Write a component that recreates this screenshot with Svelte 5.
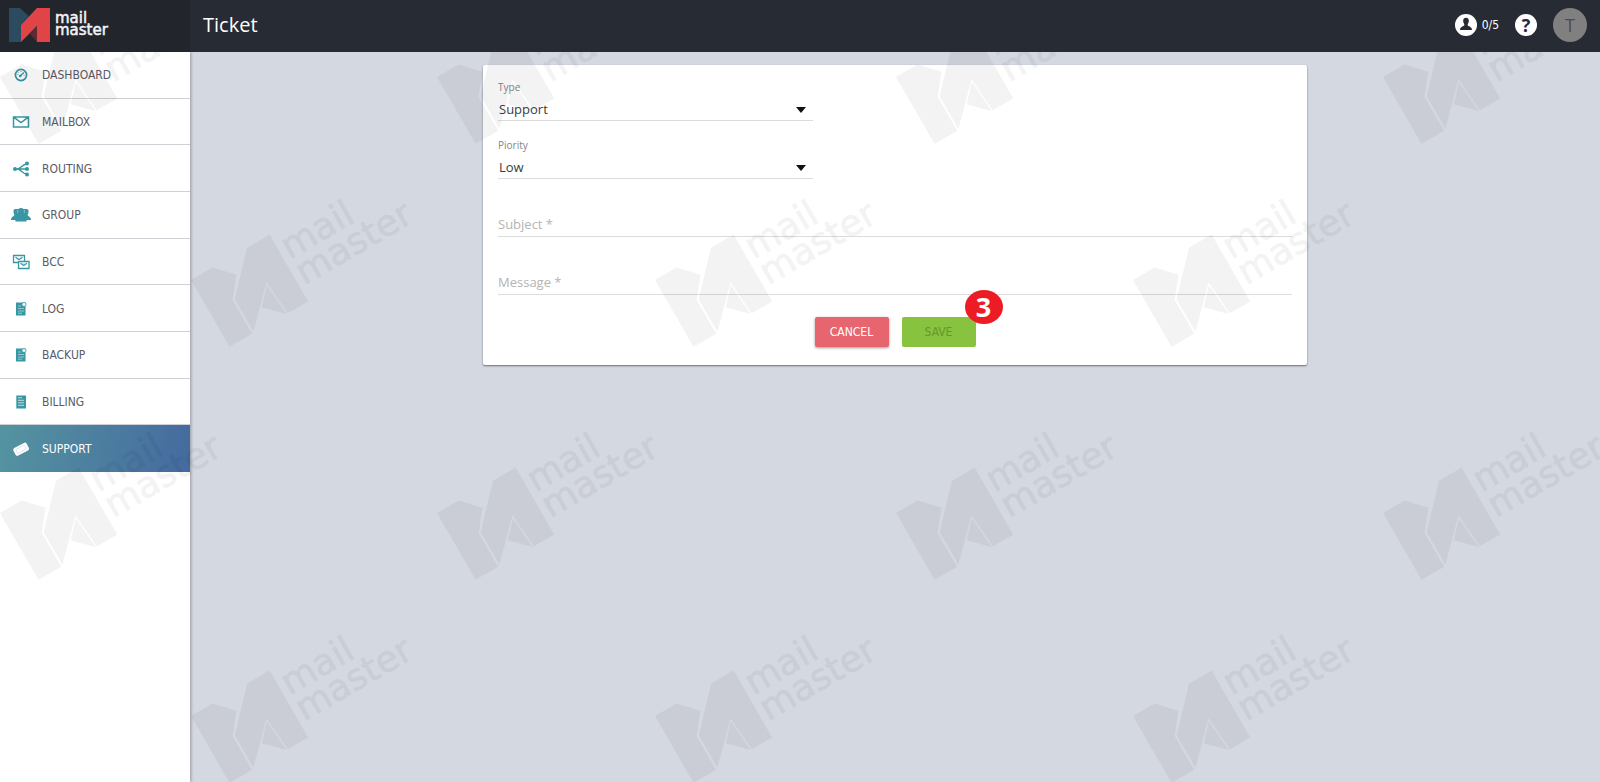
<script lang="ts">
  const menu = [
    'dashboard',
    'mailbox',
    'routing',
    'group',
    'bcc',
    'log',
    'backup',
    'billing',
    'support'
  ]
  const active = 'support'

  const watermarks = [
    [0, 77], [437, 77], [896, 77], [1383, 77],
    [191, 280], [655, 280], [1133, 280],
    [0, 513], [437, 513], [896, 513], [1383, 513],
    [191, 716], [655, 716], [1133, 716]
  ]

  let type = $state('Support')
  let priority = $state('Low')
  let subject = $state('')
  let message = $state('')
</script>

{#snippet arrow()}
  <svg class="arrow" width="10" height="6" viewBox="0 0 10 6" aria-hidden="true">
    <path d="M0 0H10L5 6Z" fill="#111" />
  </svg>
{/snippet}

{#snippet icon(name: string)}
  <svg class="icon" width="20" height="20" viewBox="0 0 20 20" aria-hidden="true">
    {#if name === 'dashboard'}
      <circle cx="10" cy="10" r="5.6" fill="none" stroke="currentColor" stroke-width="1.7" />
      <path d="M9 11L13 7.5" stroke="currentColor" stroke-width="1.4" />
      <circle cx="9.2" cy="11" r="1.3" fill="currentColor" />
      <path d="M6.5 9.5h1M7.5 7.3l.7.7M10 6v1M12.6 10.5h1" stroke="currentColor" stroke-width=".8" />
    {:else if name === 'mailbox'}
      <path d="M2.5 5H17.5V15H2.5Z M3 5.3L10 10.5L17 5.3" fill="none" stroke="currentColor" stroke-width="1.5" />
    {:else if name === 'routing'}
      <path d="M4 10H16M6 10C10 10 11 5 16 5M6 10C10 10 11 15 16 15" fill="none" stroke="currentColor" stroke-width="1.4" />
      <g fill="currentColor">
        <circle cx="4" cy="10" r="2" />
        <circle cx="16" cy="4.6" r="2" />
        <circle cx="16" cy="10" r="2" />
        <circle cx="16" cy="15.4" r="2" />
      </g>
    {:else if name === 'group'}
      <g fill="currentColor">
        <path d="M4.5 4C2.8 4 2.3 5.3 2.5 7C2.6 8.5 3.3 9 3.3 10C3.2 11.5 0 11.5 0 15H20C20 11.5 16.8 11.5 16.7 10C16.7 9 17.4 8.5 17.5 7C17.7 5.3 17.2 4 15.5 4Z" />
        <path d="M10 3C8 3 6.8 4 7 6.5C7.1 8.3 8.2 9.3 8.2 10.5C8.2 12.3 4.3 12.5 4.3 16.5H15.7C15.7 12.5 11.8 12.3 11.8 10.5C11.8 9.3 12.9 8.3 13 6.5C13.2 4 12 3 10 3Z" />
      </g>
      <path d="M6.7 5V8M13.3 5V8" stroke="#fff" stroke-width=".4" />
    {:else if name === 'bcc'}
      <g fill="#fff" stroke="currentColor" stroke-width="1.3">
        <path d="M2.5 3.5H13.5V10.5H2.5Z M4.5 5.3L8 7.5L11.5 5.3" />
        <path d="M7.5 9.5H18V16.5H7.5Z M9.5 11.3L12.8 13.5L16 11.3" />
      </g>
    {:else if name === 'log' || name === 'backup'}
      <path d="M5 3.5H14.5V16.5H5Z" fill="currentColor" />
      <path d="M7 7h3M7 9.5h6M7 12h6M7 14.2h4" stroke="#a9d6da" stroke-width=".8" />
      <circle cx="13" cy="5.5" r="2.1" fill="#e7f4f4" stroke="currentColor" stroke-width=".7" />
    {:else if name === 'billing'}
      <path d="M5.3 3.5H15V16.5H5.3Z" fill="currentColor" />
      <path d="M7 5.8h4M7 8.3h6M7 10.8h6M7 13.3h6" stroke="#cfe9ea" stroke-width=".9" />
    {:else}
      <g transform="rotate(-28 10 10)">
        <rect x="2.5" y="6" width="15" height="8.5" rx="2" fill="#fff" />
        <rect x="5" y="8" width="10" height="4.5" rx="1" fill="none" stroke="#c5d6df" stroke-width=".6" />
      </g>
    {/if}
  </svg>
{/snippet}

<div class="app">
  <header class="topbar">
    <a class="brand" href="#home" aria-label="mail master">
      <svg width="106" height="36" viewBox="0 0 106 36" aria-hidden="true">
        <path d="M0 0H11L23 11L12 20V34H0Z" fill="#2d4b5e" />
        <path d="M11 0L21 9L28 0V4L12 17L19 8Z" fill="#263a4c" />
        <path d="M28 0H41V34H28V18L12 34V17Z" fill="#e04447" />
        <path d="M28 18V34L21 26Z" fill="#5e2a33" />
        <g class="brand-text" fill="#f4f4f4" stroke="#f4f4f4" stroke-width=".5">
          <text x="46" y="15">mail</text>
          <text x="46" y="27">master</text>
        </g>
      </svg>
    </a>
    <h1>Ticket</h1>
    <div class="account">
      <button class="users" type="button">
        <svg width="22" height="22" viewBox="0 0 22 22" aria-hidden="true">
          <circle cx="11" cy="11" r="11" fill="#fff" />
          <path d="M11 3.8C8.9 3.8 8 5.3 8.2 7.5C8.3 9 9.4 9.8 9.4 11C9.4 12.3 5 12.3 5 16H17C17 12.3 12.6 12.3 12.6 11C12.6 9.8 13.7 9 13.8 7.5C14 5.3 13.1 3.8 11 3.8Z" fill="#272b33" />
        </svg>
        <span>0/5</span>
      </button>
      <button class="help" type="button" aria-label="Help">?</button>
      <button class="avatar" type="button">T</button>
    </div>
  </header>

  <div class="body">
    <aside class="sidebar">
      <nav>
        {#each menu as name}
          <a href="#{name}" class:active={name === active}>
            {@render icon(name)}
            <span>{name.toUpperCase()}</span>
          </a>
        {/each}
      </nav>
    </aside>

    <main>
      <form class="card" onsubmit={(e) => e.preventDefault()}>
        <div class="field half">
          <label for="type">Type</label>
          <div class="select">
            <select id="type" bind:value={type}>
              <option>Support</option>
              <option>Billing</option>
            </select>
            {@render arrow()}
          </div>
        </div>
        <div class="field half">
          <label for="priority">Piority</label>
          <div class="select">
            <select id="priority" bind:value={priority}>
              <option>Low</option>
              <option>Medium</option>
              <option>High</option>
            </select>
            {@render arrow()}
          </div>
        </div>
        <div class="field floating">
          <input id="subject" type="text" bind:value={subject} />
          <label for="subject" class:hidden={subject !== ''}>Subject *</label>
        </div>
        <div class="field floating">
          <textarea id="message" rows="1" bind:value={message}></textarea>
          <label for="message" class:hidden={message !== ''}>Message *</label>
        </div>
        <div class="actions">
          <button class="cancel" type="button">CANCEL</button>
          <div class="save-wrap">
            <button class="save" type="submit" disabled={!subject || !message}>SAVE</button>
            <span class="step">3</span>
          </div>
        </div>
      </form>
    </main>
  </div>

  <svg class="watermarks" aria-hidden="true">
    {#each watermarks as [x, y]}
      <g transform="translate({x} {y}) rotate(-30) scale(2.27)">
        <path d="M0 0H11L18.5 8L11.5 16.8V34H0Z" />
        <path d="M28.5 0H40V34H29.6L28.3 17.5L12.4 33.5V17Z" />
        <path d="M27.8 18.7L29 34L21 26Z" />
        <g class="brand-text large" stroke="#000" stroke-width=".3">
          <text x="42" y="14">mail</text>
          <text x="42" y="27">master</text>
        </g>
      </g>
    {/each}
  </svg>
</div>

<style>
  :global(body) {
    background: #d4d8e1;
  }

  .app {
    position: relative;
    min-height: 100vh;
    display: flex;
    flex-direction: column;
    overflow: hidden;
    font-family: "DejaVu Sans Condensed", "Noto Sans", sans-serif;
    font-size: 12px;
    color: #4a4a55;
  }

  button,
  input,
  select,
  textarea {
    margin: 0;
    padding: 0;
    border: none;
    background: none;
    font: inherit;
    color: inherit;
  }

  .topbar {
    position: relative;
    z-index: 1;
    height: 52px;
    display: flex;
    align-items: center;
    background: #272b33;
    color: #fff;
  }

  .brand {
    box-sizing: border-box;
    width: 190px;
    height: 52px;
    padding: 8px 9px;
    background: #22252c;
  }

  .brand svg {
    display: block;
  }

  .brand-text {
    font-family: "DejaVu Sans", sans-serif;
    font-size: 15px;
  }

  .brand-text.large {
    font-size: 16px;
  }

  h1 {
    margin: 0;
    padding: 0 0 2px 13px;
    flex: 1;
    font-family: "Open Sans", sans-serif;
    font-size: 20px;
    line-height: 24px;
    font-weight: 400;
  }

  .account {
    display: flex;
    align-items: center;
    gap: 16px;
    padding: 0 13px 2px 0;
  }

  .users {
    display: flex;
    align-items: center;
    gap: 5px;
  }

  .help {
    width: 22px;
    height: 22px;
    border-radius: 50%;
    background: #fff;
    color: #272b33;
    font-family: "Open Sans", sans-serif;
    font-size: 18px;
    line-height: 22px;
    font-weight: 700;
  }

  .avatar {
    width: 34px;
    height: 34px;
    border-radius: 50%;
    background: #808080;
    color: #4c4c4c;
    font-family: "Open Sans", sans-serif;
    font-size: 18px;
  }

  .body {
    flex: 1;
    display: flex;
  }

  .sidebar {
    width: 190px;
    flex-shrink: 0;
    background: #fff;
    box-shadow: 1px 0 3px rgba(0, 0, 0, 0.3);
  }

  nav {
    display: grid;
    grid-auto-rows: 1fr;
    height: 420px;
  }

  nav a {
    display: flex;
    align-items: center;
    gap: 11px;
    padding: 1px 0 0 11px;
    border-bottom: 1px solid #cfd0d5;
    color: #5a5b66;
    text-decoration: none;
  }

  nav a.active {
    border-color: transparent;
    background: linear-gradient(100deg, #5494a0, #456a9f) border-box;
    color: #fff;
  }

  .icon {
    color: #3797a4;
  }

  nav a.active .icon {
    color: #fff;
  }

  main {
    flex: 1;
    padding: 13px 16px;
  }

  .card {
    box-sizing: border-box;
    max-width: 824px;
    margin: 0 auto;
    padding: 14px 15px 18px;
    border-radius: 2px;
    background: #fff;
    box-shadow: 0 1px 2px rgba(0, 0, 0, 0.5);
  }

  .field {
    display: grid;
    grid-template-rows: 17px 24px;
    margin-bottom: 16px;
    border-bottom: 1px solid #dcdcdc;
    font-family: "Open Sans", sans-serif;
    font-size: 13px;
  }

  .half {
    max-width: 315px;
  }

  .field label {
    font-size: 10px;
    line-height: 16px;
    color: #85858a;
  }

  .select {
    display: grid;
    align-items: center;
  }

  .select select {
    grid-area: 1 / 1;
    height: 24px;
    padding: 2px 0 0 1px;
    appearance: none;
    outline: none;
    color: #3c3c3c;
  }

  .arrow {
    grid-area: 1 / 1;
    justify-self: end;
    margin: 4px 7px 0 0;
    pointer-events: none;
  }

  .floating input,
  .floating textarea {
    grid-area: 2 / 1;
    height: 24px;
    line-height: 24px;
    outline: none;
    resize: none;
    overflow: hidden;
  }

  .floating label {
    grid-area: 2 / 1;
    font-size: 13px;
    line-height: 24px;
    color: #b4b4b4;
    pointer-events: none;
  }

  .floating label.hidden {
    visibility: hidden;
  }

  .actions {
    display: flex;
    justify-content: center;
    gap: 13px;
    padding-top: 6px;
  }

  .actions button {
    display: block;
    width: 74px;
    height: 30px;
    border-radius: 2px;
    cursor: pointer;
  }

  .cancel {
    background: #e6656f;
    color: #fff;
    box-shadow: 0 1px 3px rgba(0, 0, 0, 0.4);
  }

  .save {
    background: #88c340;
    color: #67962f;
  }

  .save-wrap {
    position: relative;
  }

  .step {
    position: absolute;
    top: -27px;
    right: -27px;
    width: 38px;
    height: 34px;
    border-radius: 50%;
    background: #ed1c24;
    color: #fff;
    font-family: "Open Sans", sans-serif;
    font-size: 27px;
    line-height: 34px;
    font-weight: 700;
    text-align: center;
  }

  .watermarks {
    position: absolute;
    inset: 0;
    width: 100%;
    height: 100%;
    fill: #000;
    opacity: 0.045;
    pointer-events: none;
  }
</style>
